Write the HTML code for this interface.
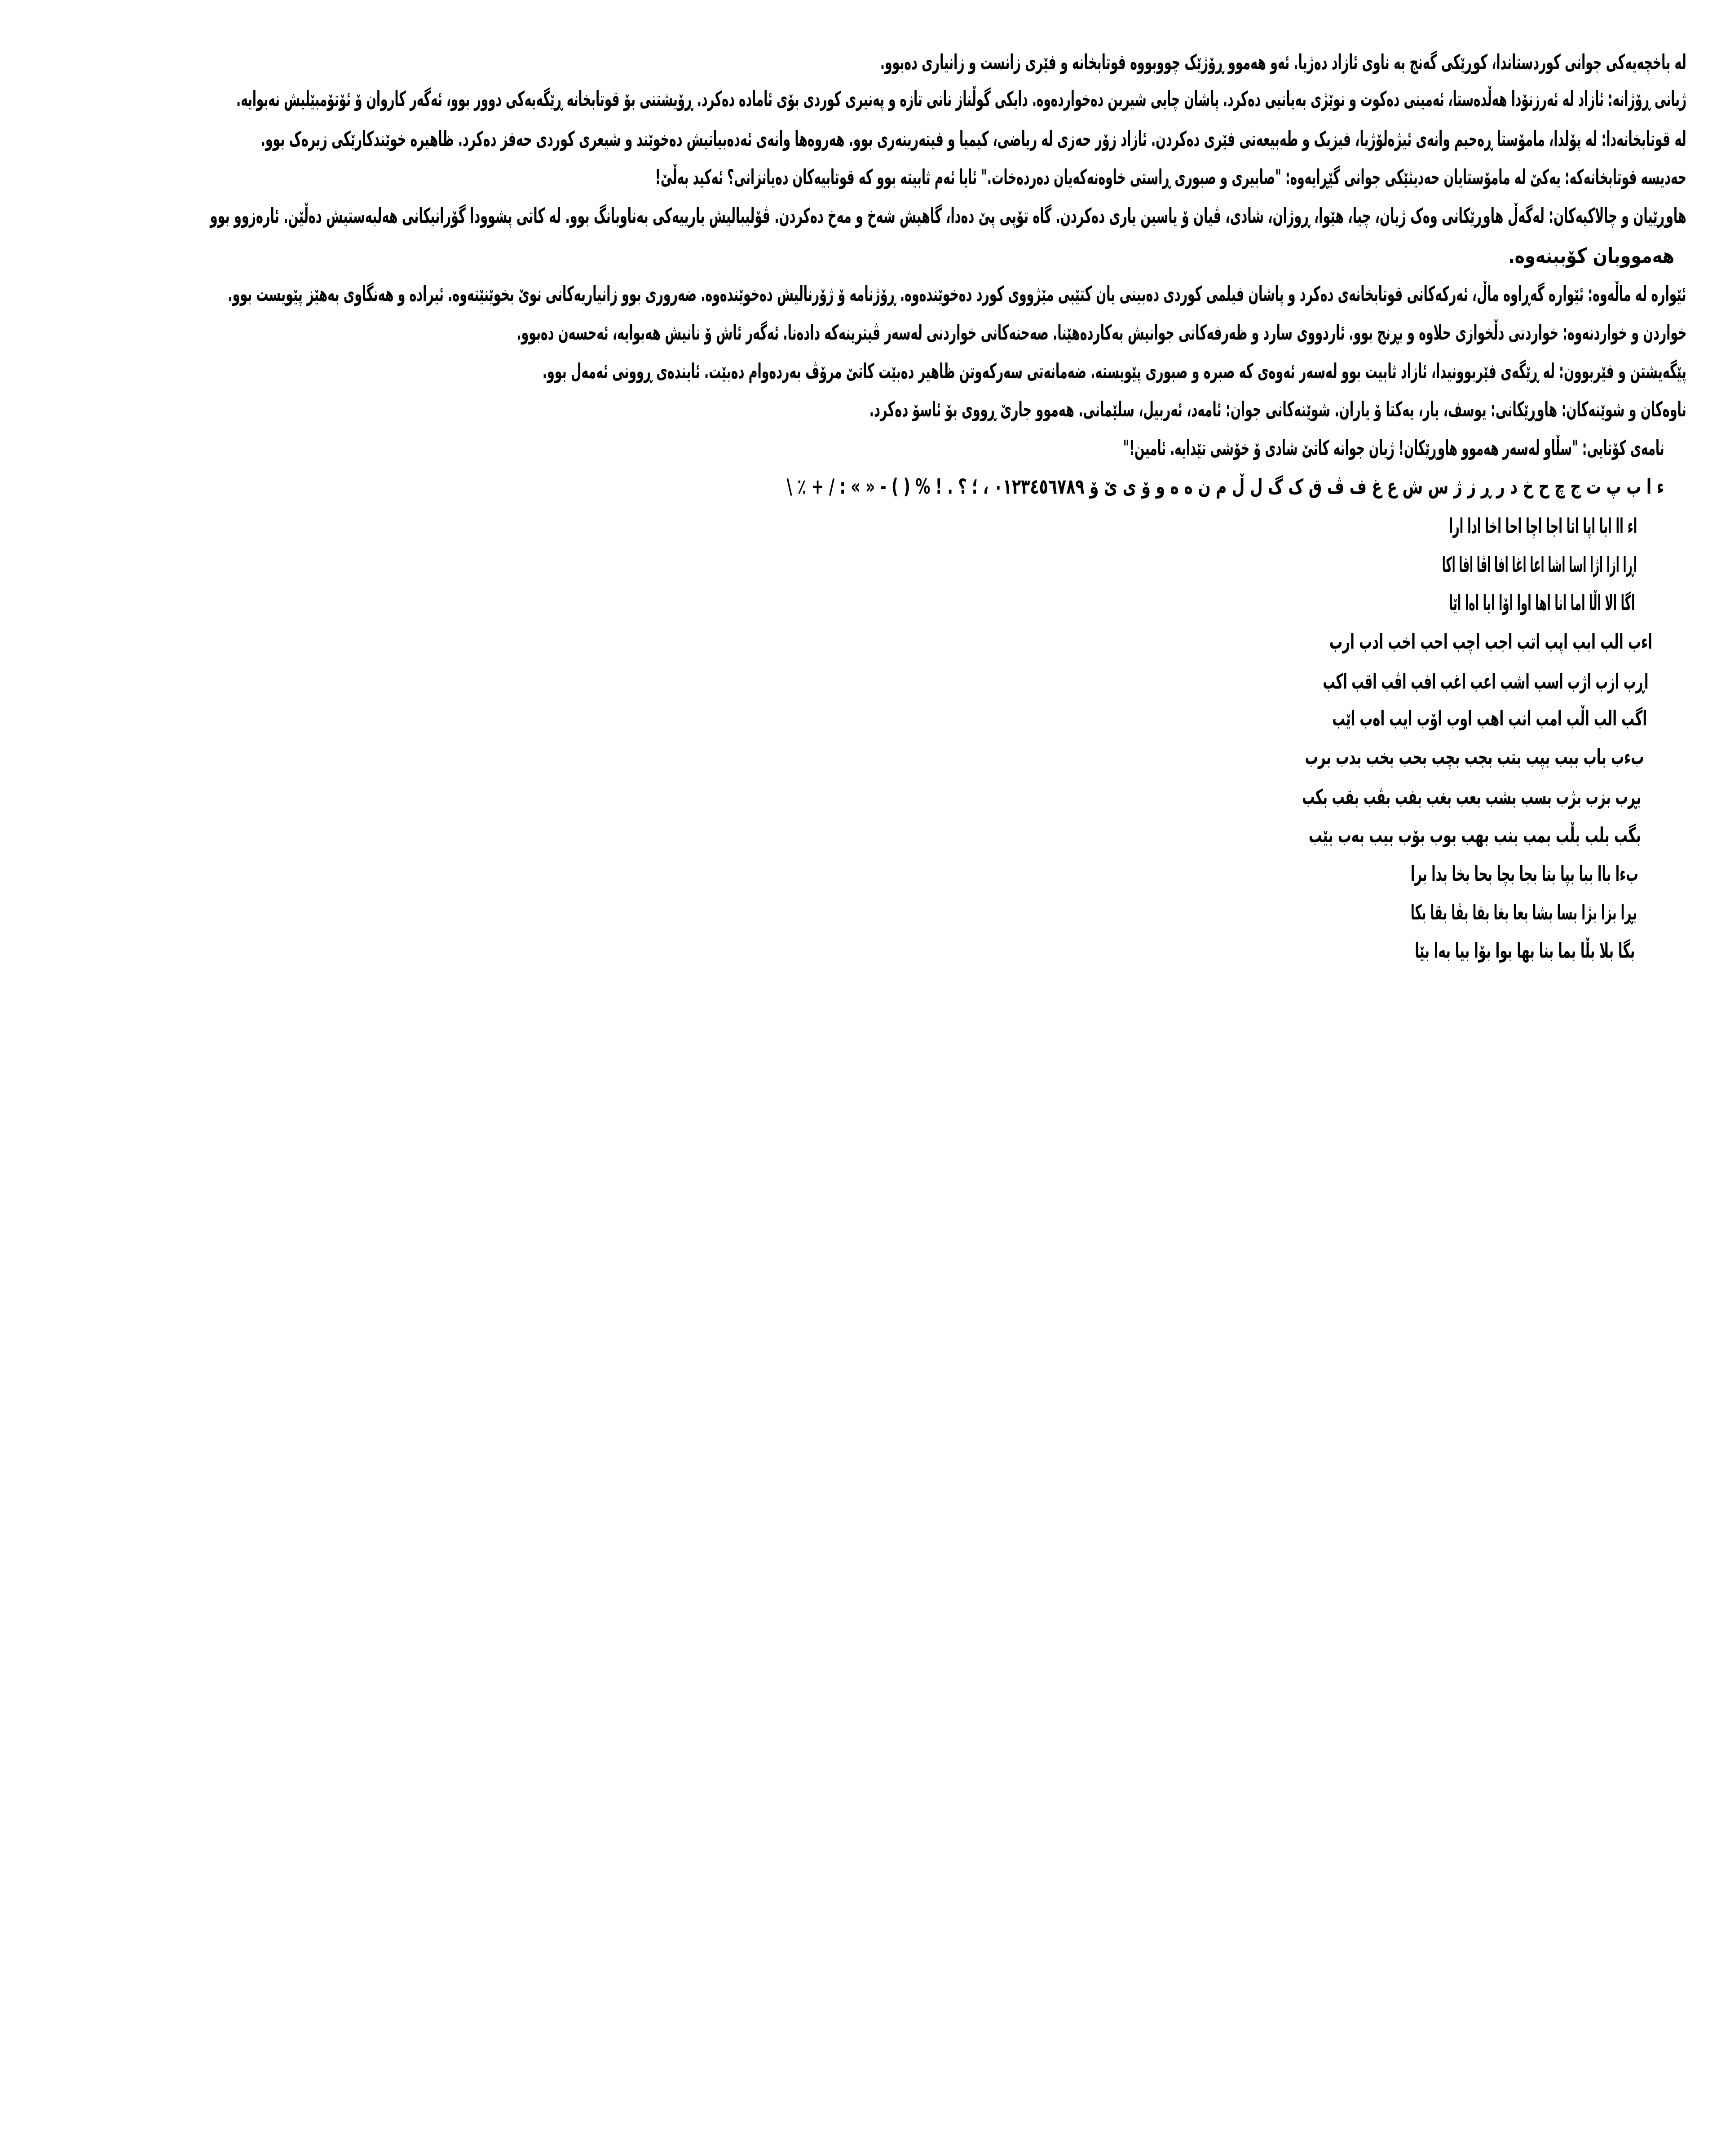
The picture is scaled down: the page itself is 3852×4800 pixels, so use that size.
<!DOCTYPE html>
<html><head><meta charset="utf-8">
<style>
html,body{margin:0;padding:0;background:#fff;}
body{width:3852px;height:4800px;position:relative;overflow:hidden;}
.l{position:absolute;white-space:nowrap;direction:rtl;font-family:"DejaVu Sans Condensed","DejaVu Sans",sans-serif;font-weight:bold;font-size:46px;line-height:60px;height:60px;color:#000;transform-origin:100% 50%;}
</style></head><body>
<div class="l">له باخچەیەکی جوانی کوردستاندا، کوڕێکی گەنج بە ناوی ئازاد دەژیا. ئەو هەموو ڕۆژێک چووبووە قوتابخانە و فێری زانست و زانیاری دەبوو.</div>
<div class="l">ژیانی ڕۆژانە: ئازاد لە ئەرزنۆدا هەڵدەستا، ئەمینی دەکوت و نوێژی بەیانیی دەکرد. پاشان چایی شیرین دەخواردەوە. دایکی گوڵناز نانی تازە و پەنیری کوردی بۆی ئامادە دەکرد. ڕۆیشتنی بۆ قوتابخانە ڕێگەیەکی دوور بوو، ئەگەر کاروان ۆ ئۆتۆمبێلیش نەبوایە.</div>
<div class="l">لە قوتابخانەدا: لە پۆلدا، مامۆستا ڕەحیم وانەی ئیژەلۆژیا، فیزیک و طەبیعەتی فێری دەکردن. ئازاد زۆر حەزی لە ریاضی، کیمیا و فیتەرینەری بوو. هەروەها وانەی ئەدەبیاتیش دەخوێند و شیعری کوردی حەفز دەکرد. ظاهیرە خوێندکارێکی زیرەک بوو.</div>
<div class="l">حەدیسە قوتابخانەکە: یەکێ لە مامۆستایان حەدیثێکی جوانی گێڕایەوە: "صابیری و صبوری ڕاستی خاوەنەکەیان دەردەخات." ئایا ئەم ثابیتە بوو کە قوتابیەکان دەیانزانی؟ ئەکید بەڵێ!</div>
<div class="l">هاوڕێیان و چالاکیەکان: لەگەڵ هاوڕێکانی وەک ژیان، چیا، هێوا، ڕوژان، شادی، ڤیان ۆ یاسین یاری دەکردن. گاە تۆپی پێ دەدا، گاهیش شەخ و مەخ دەکردن. ڤۆلیبالیش یارییەکی بەناوبانگ بوو. لە کاتی پشوودا گۆرانیکانی هەلبەستیش دەڵێن. ئارەزوو بوو</div>
<div class="l">هەمووبان کۆببنەوە.</div>
<div class="l">ئێوارە لە ماڵەوە: ئێوارە گەڕاوە ماڵ، ئەرکەکانی قوتابخانەی دەکرد و پاشان فیلمی کوردی دەبینی یان کتێبی مێژووی کورد دەخوێندەوە. ڕۆژنامە ۆ ژۆرنالیش دەخوێندەوە. ضەروری بوو زانیاریەکانی نوێ بخوێنێتەوە. ئیرادە و هەنگاوی بەهێز پێویست بوو.</div>
<div class="l">خواردن و خواردنەوە: خواردنی دڵخوازی حلاوە و بڕنج بوو. ئاردووی سارد و ظەرفەکانی جوانیش بەکاردەهێنا. صەحنەکانی خواردنی لەسەر ڤیترینەکە دادەنا. ئەگەر ئاش ۆ نانیش هەبوایە، ئەحسەن دەبوو.</div>
<div class="l">پێگەیشتن و فێربوون: لە ڕێگەی فێربوونیدا، ئازاد ثابیت بوو لەسەر ئەوەی کە صبرە و صبوری پێویستە. ضەمانەتی سەرکەوتن ظاهیر دەبێت کاتێ مرۆڤ بەردەوام دەبێت. ئایندەی ڕوونی ئەمەل بوو.</div>
<div class="l">ناوەکان و شوێنەکان: هاوڕێکانی: یوسف، یار، یەکتا ۆ یاران. شوێنەکانی جوان: ئامەد، ئەربیل، سلێمانی. هەموو جارێ ڕووی بۆ ئاسۆ دەکرد.</div>
<div class="l">نامەی کۆتایی: "سڵاو لەسەر هەموو هاوڕێکان! ژیان جوانە کاتێ شادی ۆ خۆشی تێدایە. ئامین!"</div>
<div class="l">ء ا ب پ ت ج چ ح خ د ر ڕ ز ژ س ش ع غ ف ڤ ق ک گ ل ڵ م ن ە ه و ۆ ی ێ ۆ ٠١٢٣٤٥٦٧٨٩ ، ؛ ؟ . ! % ( ) - « » : / + ٪ \</div>
<div class="l">اء اا ابا اپا اتا اجا اچا احا اخا ادا ارا</div>
<div class="l">اڕا ازا اژا اسا اشا اعا اغا افا اڤا اقا اکا</div>
<div class="l">اگا الا اڵا اما انا اها اوا اۆا ایا اەا اێا</div>
<div class="l">اءب الب ابب اپب اتب اجب اچب احب اخب ادب ارب</div>
<div class="l">اڕب ازب اژب اسب اشب اعب اغب افب اڤب اقب اکب</div>
<div class="l">اگب الب اڵب امب انب اهب اوب اۆب ایب اەب اێب</div>
<div class="l">بءب باب ببب بپب بتب بجب بچب بحب بخب بدب برب</div>
<div class="l">بڕب بزب بژب بسب بشب بعب بغب بفب بڤب بقب بکب</div>
<div class="l">بگب بلب بڵب بمب بنب بهب بوب بۆب بیب بەب بێب</div>
<div class="l">بءا باا ببا بپا بتا بجا بچا بحا بخا بدا برا</div>
<div class="l">بڕا بزا بژا بسا بشا بعا بغا بفا بڤا بقا بکا</div>
<div class="l">بگا بلا بڵا بما بنا بها بوا بۆا بیا بەا بێا</div>
<script>
var T=[[1960,3755,138],[526,3755,220],[581,3755,309],[1459,3755,394],[468,3755,480],[3358,3728,569],[508,3755,654],[1150,3755,740],[1208,3755,826],[1936,3755,911],[2501,3706,997],[1752,3706,1083],
[3226,3645,1171],[3211,3645,1257],[3226,3640,1342],[2960,3679,1428],[2945,3670,1517],[2966,3667,1599],[2905,3660,1685],[2899,3654,1774],[2914,3654,1859],[3141,3648,1945],[3141,3645,2031],[3150,3640,2116]];
var els=document.querySelectorAll('.l');
for(var i=0;i<els.length;i++){var e=els[i],t=T[i];
e.style.right=(3852-t[1])+'px';e.style.top=(t[2]-30)+'px';
var w=e.getBoundingClientRect().width;if(w>0){e.style.transform='scaleX('+((t[1]-t[0])/w)+')';}}
</script>
</body></html>
